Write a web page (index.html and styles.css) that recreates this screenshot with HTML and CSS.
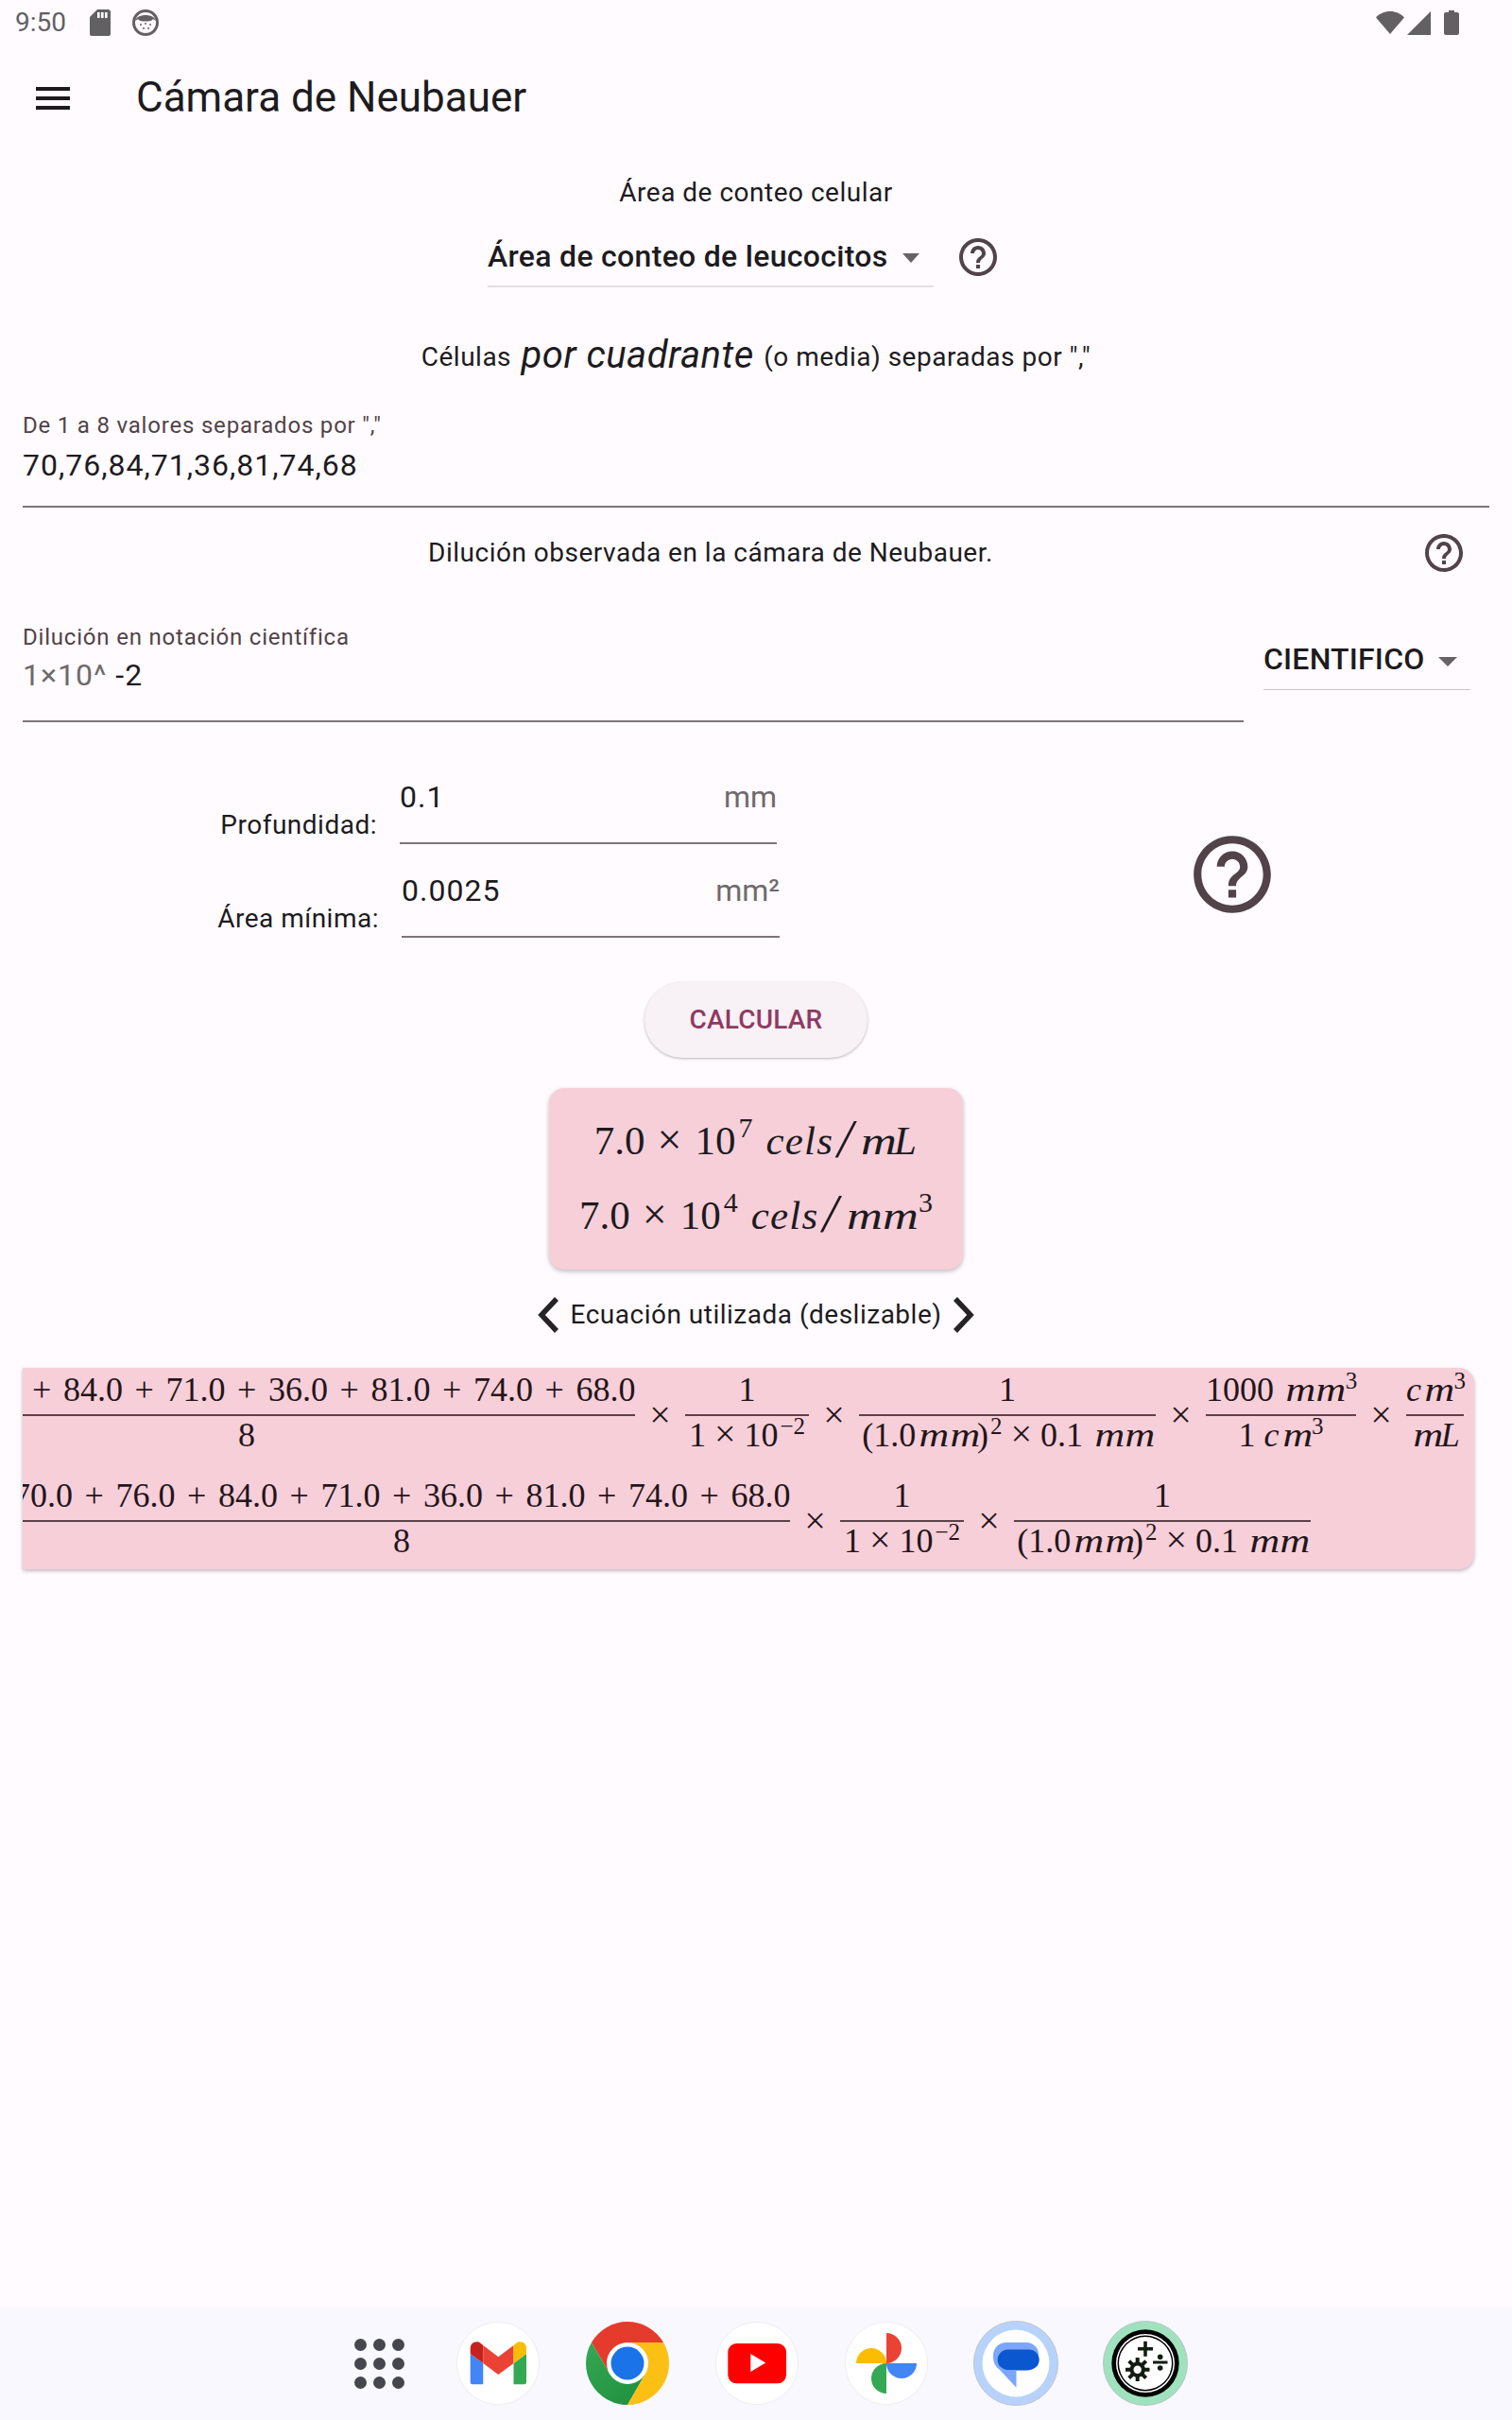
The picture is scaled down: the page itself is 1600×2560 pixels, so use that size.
FILE: index.html
```html
<!DOCTYPE html>
<html lang="es">
<head>
<meta charset="utf-8">
<title>Cámara de Neubauer</title>
<link rel="stylesheet" href="styles.css">
</head>
<body>
<header class="status">
  <span class="time">9:50</span>
  <svg class="st-sd" viewBox="0 0 22 28"><path fill="#636063" d="M8 0h11a3 3 0 0 1 3 3v23a2 2 0 0 1-2 2H2a2 2 0 0 1-2-2V8z"/><path fill="#fffbff" d="M8 3h2.600v6H8zM12 3h2.600v6H12zM16 3h2.600v6H16z"/></svg>
  <svg class="st-face" viewBox="0 0 28 28"><circle cx="14" cy="14" r="12.500" fill="#fffbff" stroke="#636063" stroke-width="3"/><path fill="#636063" d="M3 12C5 4 23 4 25 12c-2-1-3-2-4-1-1 2-13 2-14 0-1-1-2 0-4 1z"/><g fill="#636063"><circle cx="9" cy="16" r="1"/><circle cx="14" cy="15" r="1"/><circle cx="19" cy="16" r="1"/><circle cx="12" cy="20" r="1"/><circle cx="17" cy="20" r="1"/></g></svg>
  <span class="st-spacer"></span>
  <svg class="st-wifi" viewBox="0 0 30 24"><path fill="#636063" d="M15 24 0 6.500C3.500 2.500 9 0 15 0s11.500 2.500 15 6.500z"/></svg>
  <svg class="st-signal" viewBox="0 0 25 25"><path fill="#636063" d="M0 25 25 0v25z"/></svg>
  <svg class="st-batt" viewBox="0 0 16 26"><path fill="#636063" d="M5 0h6v2h3a2 2 0 0 1 2 2v20a2 2 0 0 1-2 2H2a2 2 0 0 1-2-2V4a2 2 0 0 1 2-2h3z"/></svg>
</header>

<div class="appbar">
  <span class="burger"><i></i><i></i><i></i></span>
  <h1 class="title">Cámara de Neubauer</h1>
</div>

<main class="main">
  <p class="area-title">Área de conteo celular</p>
  <div class="area-row">
    <div class="dropdown area-dd">
      <span class="dd-text strong">Área de conteo de leucocitos</span>
      <span class="caret"></span>
    </div>
    <svg class="help" viewBox="0 0 24 24"><path d="M11 18h2v-2h-2v2zm1-16C6.480 2 2 6.480 2 12s4.480 10 10 10 10-4.480 10-10S17.520 2 12 2zm0 18c-4.410 0-8-3.590-8-8s3.590-8 8-8 8 3.590 8 8-3.590 8-8 8zm0-14c-2.210 0-4 1.790-4 4h2c0-1.100.9-2 2-2s2 .9 2 2c0 2-3 1.750-3 5h2c0-2.250 3-2.500 3-5 0-2.210-1.790-4-4-4z"/></svg>
  </div>

  <p class="cells">Células <em>por cuadrante</em> (o media) separadas por ","</p>

  <div class="field field-values">
    <div class="f-label">De 1 a 8 valores separados por ","</div>
    <div class="f-value">70,76,84,71,36,81,74,68</div>
  </div>

  <div class="dil-row">
    <p class="dil-text">Dilución observada en la cámara de Neubauer.</p>
    <svg class="help" viewBox="0 0 24 24"><path d="M11 18h2v-2h-2v2zm1-16C6.480 2 2 6.480 2 12s4.480 10 10 10 10-4.480 10-10S17.520 2 12 2zm0 18c-4.410 0-8-3.590-8-8s3.590-8 8-8 8 3.590 8 8-3.590 8-8 8zm0-14c-2.210 0-4 1.790-4 4h2c0-1.100.9-2 2-2s2 .9 2 2c0 2-3 1.750-3 5h2c0-2.250 3-2.500 3-5 0-2.210-1.790-4-4-4z"/></svg>
  </div>

  <div class="sci-row">
    <div class="field field-sci">
      <div class="f-label">Dilución en notación científica</div>
      <div class="f-value sci-value"><span class="muted">1×10^</span> -2</div>
    </div>
    <div class="dropdown sci-dd">
      <span class="dd-text strong">CIENTIFICO</span>
      <span class="caret"></span>
    </div>
  </div>

  <div class="dims">
    <div class="dims-col">
      <div class="dim-row">
        <span class="dim-label">Profundidad:</span>
        <div class="dim-input"><span>0.1</span><span class="muted unit">mm</span></div>
      </div>
      <div class="dim-row dim-row-area">
        <span class="dim-label">Área mínima:</span>
        <div class="dim-input"><span>0.0025</span><span class="muted unit">mm²</span></div>
      </div>
    </div>
    <svg class="help help-big" viewBox="0 0 24 24"><path d="M11 18h2v-2h-2v2zm1-16C6.480 2 2 6.480 2 12s4.480 10 10 10 10-4.480 10-10S17.520 2 12 2zm0 18c-4.410 0-8-3.590-8-8s3.590-8 8-8 8 3.590 8 8-3.590 8-8 8zm0-14c-2.210 0-4 1.790-4 4h2c0-1.100.9-2 2-2s2 .9 2 2c0 2-3 1.750-3 5h2c0-2.250 3-2.500 3-5 0-2.210-1.790-4-4-4z"/></svg>
  </div>

  <button class="calc" type="button">CALCULAR</button>

  <section class="result">
    <div class="r-line">7.0<span class="r-times">×</span>10<span class="r-sup">7</span><span class="r-unit">cels<span class="r-slash">/</span><span class="m">m</span>L</span></div>
    <div class="r-line">7.0<span class="r-times">×</span>10<span class="r-sup">4</span><span class="r-unit">cels<span class="r-slash">/</span><span class="m">m</span><span class="m">m</span><span class="r-sup">3</span></span></div>
  </section>

  <div class="nav">
    <svg class="chev" viewBox="0 0 24 40"><path d="M21 3 5 20l16 17"/></svg>
    <span class="nav-text">Ecuación utilizada (deslizable)</span>
    <svg class="chev" viewBox="0 0 24 40"><path d="M3 3l16 17L3 37"/></svg>
  </div>

  <section class="eq">
    <div class="eq-row eq-row-a">
      <div class="frac w-sum"><div class="num">70.0<span class="op">+</span>76.0<span class="op">+</span>84.0<span class="op">+</span>71.0<span class="op">+</span>36.0<span class="op">+</span>81.0<span class="op">+</span>74.0<span class="op">+</span>68.0</div><div class="den">8</div></div>
      <span class="x">×</span>
      <div class="frac w-ten"><div class="num">1</div><div class="den">1<span class="op-s">×</span>10<span class="sup">−2</span></div></div>
      <span class="x">×</span>
      <div class="frac w-pow"><div class="num">1</div><div class="den">(1.0<span class="m">m</span><span class="m">m</span>)<span class="sup">2</span><span class="op-s">×</span>0.1 <span class="m">m</span><span class="m">m</span></div></div>
      <span class="x">×</span>
      <div class="frac w-thou"><div class="num">1000 <span class="m">m</span><span class="m">m</span><span class="sup">3</span></div><div class="den">1 <i>c</i><span class="m">m</span><span class="sup">3</span></div></div>
      <span class="x">×</span>
      <div class="frac w-cm"><div class="num"><i>c</i><span class="m">m</span><span class="sup">3</span></div><div class="den"><span class="m">m</span><i>L</i></div></div>
    </div>
    <div class="eq-row eq-row-b">
      <div class="frac w-sum"><div class="num">70.0<span class="op">+</span>76.0<span class="op">+</span>84.0<span class="op">+</span>71.0<span class="op">+</span>36.0<span class="op">+</span>81.0<span class="op">+</span>74.0<span class="op">+</span>68.0</div><div class="den">8</div></div>
      <span class="x">×</span>
      <div class="frac w-ten"><div class="num">1</div><div class="den">1<span class="op-s">×</span>10<span class="sup">−2</span></div></div>
      <span class="x">×</span>
      <div class="frac w-pow"><div class="num">1</div><div class="den">(1.0<span class="m">m</span><span class="m">m</span>)<span class="sup">2</span><span class="op-s">×</span>0.1 <span class="m">m</span><span class="m">m</span></div></div>
    </div>
  </section>
</main>

<footer class="dock">
  <div class="apps-grid"><i></i><i></i><i></i><i></i><i></i><i></i><i></i><i></i><i></i></div>
  <svg class="app" viewBox="0 0 88 88"><circle cx="44" cy="44" r="43.600" fill="#fff" stroke="#e9e9ef" stroke-width=".8"/><path fill="#4285f4" d="M14.700 34l13.600 10v22.300H17a2.300 2.300 0 0 1-2.300-2.300z"/><path fill="#34a853" d="M60.500 44L74 34v30a2.300 2.300 0 0 1-2.300 2.300H60.500z"/><path fill="#c5221f" d="M14.700 34v-6c0-5.500 6.500-8.700 10.800-5.300l2.800 2.300v19z"/><path fill="#ea4335" d="M28.300 25l16 12.300L60.500 25v19L44.300 56 28.300 44z"/><path fill="#fbbc04" d="M60.500 44V25l2.800-2.300C67.600 19.300 74 22.500 74 28v6z"/></svg>
  <svg class="app" viewBox="0 0 88 88"><defs><linearGradient id="gg" x1="0" y1="0" x2="1" y2="1"><stop offset="0" stop-color="#34a853"/><stop offset="1" stop-color="#1e8e3e"/></linearGradient></defs><path fill="#e53b2d" d="M82.100 22A44 44 0 0 0 5.900 22L25 55 44 22z"/><path fill="url(#gg)" d="M5.900 22A44 44 0 0 0 44 88L63 55H25z"/><path fill="#fcc015" d="M82.100 22A44 44 0 0 1 44 88L63 55 44 22z"/><circle cx="44" cy="44" r="22" fill="#fff"/><circle cx="44" cy="44" r="17.500" fill="#1a73e8"/></svg>
  <svg class="app" viewBox="0 0 88 88"><circle cx="44" cy="44" r="43.600" fill="#fff" stroke="#e9e9ef" stroke-width=".8"/><rect x="13.300" y="23" width="61.700" height="42.300" rx="9" fill="#f00"/><path fill="#fff" d="M37.300 34l16 9.500-16 9.500z"/></svg>
  <svg class="app" viewBox="0 0 88 88"><circle cx="44" cy="44" r="43.600" fill="#fff" stroke="#e9e9ef" stroke-width=".8"/><path fill="#ea4335" d="M44 12a16 16 0 0 1 0 32z"/><path fill="#fbbc04" d="M12 44a16 16 0 0 1 32 0z"/><path fill="#34a853" d="M44 44v32a16 16 0 0 1 0-32z"/><path fill="#4285f4" d="M44 44h32a16 16 0 0 1-32 0z"/></svg>
  <svg class="app app-big" viewBox="0 0 90 90"><circle cx="45" cy="45" r="44.600" fill="#b8d3fb" stroke="#bdbdc4" stroke-width=".8"/><circle cx="45" cy="45" r="35.500" fill="#fff"/><path fill="#7ba6fb" d="M35 23h22a13 13 0 0 1 12 15c0 7-5 15-14 15h-9.500v17.800L28 52c-5-4-7-8-7-15 0-8 6-14 14-14z"/><rect x="25.700" y="30.500" width="44" height="21.500" rx="10.700" fill="#0b57d0"/></svg>
  <svg class="app app-big" viewBox="0 0 90 90"><circle cx="45" cy="45" r="44.600" fill="#9fe2bd" stroke="#bdbdc4" stroke-width=".8"/><circle cx="45" cy="45" r="35.700" fill="#000"/><circle cx="45" cy="45" r="31" fill="#fff"/><circle cx="45" cy="45" r="29.500" fill="#000"/><circle cx="45" cy="45" r="28" fill="#fff"/><path fill="#121c12" d="M43.200 21.700h3.600v6.200H53v3.600h-6.200v6.200h-3.600v-6.200H37v-3.600h6.200zM53 42.500h15.500v3H53z"/><circle cx="60.700" cy="38.200" r="2.800" fill="#121c12"/><circle cx="60.700" cy="50" r="2.800" fill="#121c12"/><circle cx="36.700" cy="51.700" r="6.200" fill="none" stroke="#121c12" stroke-width="4"/><path stroke="#121c12" stroke-width="4" d="M36.700 39v6M36.700 58v6M24 51.700h6M43.500 51.700h6M27.700 42.700l4 4M41.700 56.700l4 4M45.700 42.700l-4 4M31.700 56.700l-4 4"/></svg>
</footer>
</body>
</html>
```

FILE: styles.css
```css
* { box-sizing: border-box; }
html, body { margin: 0; }
body {
  width: 1600px;
  min-height: 2560px;
  display: flex;
  flex-direction: column;
  background: #fffbff;
  color: #1d1b1e;
  font-family: Roboto, "Noto Sans", sans-serif;
  overflow: hidden;
}
p, h1 { margin: 0; font-weight: 400; }

/* status bar */
.status { height: 48px; display: flex; align-items: center; padding-left: 16px; color: #636063; }
.time { font-size: 28px; line-height: 48px; width: 79px; }
.st-sd { width: 22px; height: 28px; margin-right: 23px; }
.st-face { width: 28px; height: 28px; }
.st-spacer { flex: 1; }
.st-wifi { width: 30px; height: 24px; margin-right: 3px; }
.st-signal { width: 25px; height: 25px; margin-right: 14px; }
.st-batt { width: 16px; height: 26px; margin-right: 56px; }

/* app bar */
.appbar { height: 112px; display: flex; align-items: center; padding-left: 38px; }
.burger { width: 36px; height: 24px; display: flex; flex-direction: column; justify-content: space-between; }
.burger i { display: block; height: 4px; background: #1d1b1e; }
.title { font-size: 44px; line-height: 56px; margin: 0 0 3px 70px; }

.main { flex: 1; }

.area-title { margin-top: 24px; font-size: 28px; line-height: 40px; letter-spacing: .5px; text-align: center; }
.area-row { display: flex; align-items: flex-start; margin-top: 15px; padding-left: 516px; }
.dropdown { display: flex; align-items: center; }
.dd-text { font-size: 32px; line-height: 64px; letter-spacing: .2px; }
.strong { font-weight: 500; }
.area-dd .dd-text { letter-spacing: .3px; }
.caret { width: 0; height: 0; margin-top: 4px; border-left: 10px solid transparent; border-right: 10px solid transparent; border-top: 10px solid #666366; }
.area-dd { width: 472px; height: 65px; border-bottom: 2px solid #e2dee1; }
.area-dd .caret { margin-left: 15px; border-left-width: 9px; border-right-width: 9px; }

.help { width: 48px; height: 48px; fill: #514347; flex: none; }
.area-row .help { margin: 9px 0 0 23px; }

.cells { height: 62px; margin-top: 42px; font-size: 28px; line-height: 60px; letter-spacing: .5px; text-align: center; }
.cells em { margin: 0 3px; font-size: 40px; letter-spacing: .5px; vertical-align: -2px; }

.field { border-bottom: 2px solid #7f7478; }
.f-label { font-size: 24px; line-height: 40px; letter-spacing: .8px; color: #514347; }
.f-value { font-size: 32px; line-height: 44px; letter-spacing: 1px; }
.field-values { margin: 22px 24px 0; height: 107px; }
.dil-row { display: flex; align-items: center; margin: 24px 48px 0 24px; height: 48px; }
.dil-text { flex: 1; margin-right: 24px; font-size: 28px; line-height: 40px; letter-spacing: .5px; text-align: center; }

.sci-row { display: flex; align-items: flex-start; margin-top: 45px; padding-left: 24px; }
.field-sci { width: 1292px; height: 110px; }
.sci-value { line-height: 41px; }
.muted { color: #6e6a6b; }
.unit { letter-spacing: 0; }
.sci-dd { width: 219px; height: 66px; margin: 10px 0 0 21px; border-bottom: 1px solid #c9c5c8; }
.sci-dd .caret { margin: 6px 0 0 15px; }

.dims { display: flex; align-items: flex-start; margin-top: 56px; }
.dims-col { width: 825px; }
.dim-row { display: flex; height: 73px; }
.dim-row-area { margin-top: 26px; }
.dim-label { width: 399px; align-self: flex-end; font-size: 28px; line-height: 40px; letter-spacing: .5px; text-align: right; }
.dim-row-area .dim-label { width: 401px; }
.dim-input { display: flex; justify-content: space-between; height: 73px; width: 399px; margin-left: 24px; border-bottom: 2px solid #7f7478; font-size: 32px; line-height: 46px; letter-spacing: 1px; }
.dim-row-area .dim-input { width: 400px; }
.help-big { width: 98px; height: 98px; margin: 56px 0 0 430px; }

.calc { display: block; width: 236px; height: 80px; margin: 47px auto 0; padding: 0; border: 0; border-radius: 40px; background: #f8f1f6; color: #8f3a62; font: 500 28px/80px Roboto, sans-serif; letter-spacing: .2px; box-shadow: 0 1px 3px rgba(0,0,0,.28); }

.result { width: 438px; height: 192px; margin: 32px auto 0; padding-top: 16px; border-radius: 16px; background: #f7cfd9; box-shadow: 0 2px 5px rgba(0,0,0,.26); font-family: "Liberation Serif", serif; font-size: 43px; }
.r-line { height: 79px; line-height: 79px; text-align: center; white-space: nowrap; }
.r-times { margin: 0 14px 0 13px; font-size: 46px; line-height: 0; }
.r-sup { margin-left: 3px; font-size: 30px; vertical-align: 18px; line-height: 0; font-style: normal; letter-spacing: 0; }
.r-unit { margin-left: 14px; font-style: italic; letter-spacing: 1.200px; }
.r-slash { margin: 0 5px 0 4px; font-size: 58px; font-weight: 400; line-height: 0; letter-spacing: 0; vertical-align: -3px; }

.m { display: inline-block; width: .88em; margin-right: .02em; font-style: italic; line-height: 1; transform: scaleX(1.22); transform-origin: 0 50%; letter-spacing: 0; }

.nav { display: flex; align-items: center; justify-content: center; height: 48px; margin-top: 24px; gap: 12px; }
.chev { width: 24px; height: 40px; fill: none; stroke: #262325; stroke-width: 5.500; }
.nav-text { font-size: 28px; line-height: 48px; letter-spacing: .5px; }

.eq { height: 213px; margin: 32px 40px 0 24px; padding-top: 5px; overflow: hidden; border-radius: 0 16px 16px 0; background: #f7cfd9; box-shadow: 0 2px 4px rgba(0,0,0,.26); font-family: "Liberation Serif", serif; font-size: 36px; color: #241519; }
.eq-row { display: flex; align-items: center; white-space: nowrap; }
.eq-row-a { margin-left: -174px; }
.eq-row-b { margin: 22px 0 0 -10px; }
.frac { flex: none; text-align: center; }
.num { height: 44px; line-height: 36px; }
.den { height: 46px; line-height: 40px; border-top: 2px solid #5d4249; }
.x { flex: none; width: 53px; text-align: center; font-size: 40px; line-height: 40px; }
.w-sum { width: 822px; }
.w-ten { width: 131px; }
.w-pow { width: 314px; }
.w-thou { width: 159px; }
.w-cm { width: 61px; }
.op { margin: 0 12.600px; }
.op-s { margin: 0 9px; font-size: 40px; line-height: 0; }
.sup { margin-left: 2px; font-size: 25px; vertical-align: 13px; line-height: 0; }

/* dock */
.dock { height: 120px; display: flex; align-items: center; padding-left: 368px; gap: 49px; background: #f8f8fe; }
.apps-grid { width: 66px; display: grid; grid-template-columns: repeat(3, 13px); justify-content: center; gap: 7px; }
.apps-grid i { height: 13px; border-radius: 50%; background: #46464f; }
.app { width: 88px; height: 88px; flex: none; }
.app-big { width: 90px; height: 90px; margin: 0 -1px; }
```
